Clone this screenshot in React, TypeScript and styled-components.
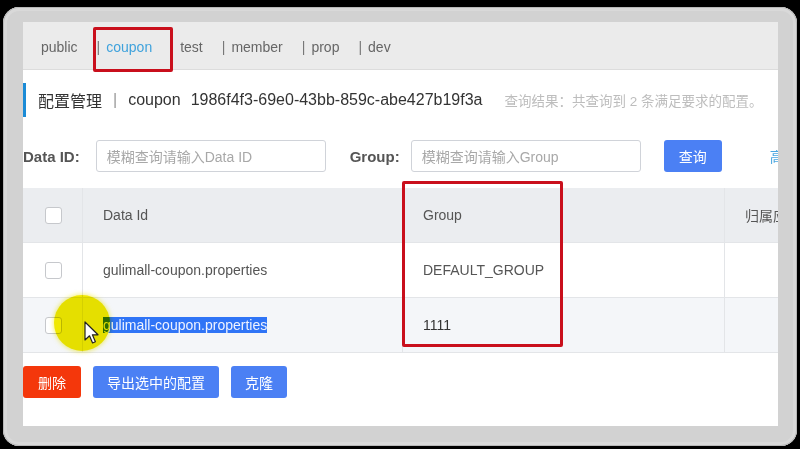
import styled, { createGlobalStyle } from 'styled-components';

const GlobalStyle = createGlobalStyle`
    html, body {
        margin: 0;
        padding: 0;
        background: #000;
    }
    *, *::before, *::after {
        box-sizing: border-box;
    }
`;

const FONT = `"Liberation Sans", "Noto Sans CJK SC", sans-serif`;

const Page = styled.div`
    width: 800px;
    height: 449px;
    background: #000;
    padding: 7px 0 0 3px;
    font-family: ${FONT};
`;
const Frame = styled.div`
    width: 794px;
    height: 439px;
    padding: 15px 19px 20px 20px;
    background: #d2d2d2;
    border-radius: 16px;
    box-shadow: inset 0 0 0 1px #b8b8b8, inset 0 0 0 4px #d9d9d9;
`;
const Screen = styled.div`
    position: relative;
    width: 755px;
    height: 404px;
    background: #fff;
    overflow: hidden;
    display: flex;
    flex-direction: column;
`;
const NavBar = styled.div`
    height: 48px;
    flex-shrink: 0;
    display: flex;
    align-items: stretch;
    padding: 3px 0 0 18px;
    background: #ebebeb;
    border-bottom: 1px solid #dcdcdc;
    font-size: 14px;
    color: #666;
`;
const NavItem = styled.span<{ $active?: boolean; $boxed?: boolean; $ml?: number }>`
    position: relative;
    display: flex;
    align-items: center;
    margin-left: ${(p) => p.$ml ?? 0}px;
    color: ${(p) => (p.$active ? '#3fa2dc' : '#666')};
    &::after {
        content: '';
        display: ${(p) => (p.$boxed ? 'block' : 'none')};
        position: absolute;
        left: -13px;
        top: 2px;
        width: 80px;
        height: 45px;
        border: 3px solid #c90f1c;
        border-radius: 2px;
    }
`;
const NavSep = styled.span`
    display: flex;
    align-items: center;
    margin: 0 6px 0 19px;
    color: #777;
`;
const Body = styled.div`
    display: flex;
    flex-direction: column;
`;
const TitleRow = styled.div`
    margin-top: 13px;
    height: 34px;
    display: flex;
    align-items: center;
    border-left: 3px solid #1b8bd6;
    padding-left: 12px;
    white-space: nowrap;
`;
const TitleText = styled.span`
    font-size: 16px;
    color: #333;
`;
const TitleSep = styled.span`
    font-size: 16px;
    color: #999;
    margin: 0 11px 0 11px;
`;
const TitleId = styled.span`
    font-size: 16px;
    color: #333;
    margin-left: 10px;
`;
const ResultText = styled.span`
    font-size: 13.5px;
    color: #bdbdbd;
    margin-left: 22px;
`;
const SearchRow = styled.div`
    margin-top: 23px;
    height: 32px;
    display: flex;
    align-items: center;
    white-space: nowrap;
    & > * {
        flex-shrink: 0;
    }
`;
const Label = styled.span<{ $gap: number }>`
    font-size: 15px;
    font-weight: bold;
    color: #555;
    margin-right: ${(p) => p.$gap}px;
`;
const SearchInput = styled.div<{ $gap: number }>`
    width: 230px;
    height: 32px;
    display: flex;
    align-items: center;
    padding-left: 10px;
    border: 1px solid #d0d3d9;
    border-radius: 3px;
    font-size: 14px;
    color: #a8a8a8;
    margin-right: ${(p) => p.$gap}px;
`;
const Button = styled.button<{ $danger?: boolean; $w: number }>`
    flex-shrink: 0;
    width: ${(p) => p.$w}px;
    height: 32px;
    border: none;
    border-radius: 3px;
    background: ${(p) => (p.$danger ? '#f4370b' : '#4b80f4')};
    color: #fff;
    font-family: ${FONT};
    font-size: 14px;
    padding: 0;
`;
const LinkText = styled.span`
    margin-left: 48px;
    font-size: 14px;
    color: #4aa6e0;
`;
const TableWrap = styled.div`
    position: relative;
    margin-top: 16px;
    width: 902px;
`;
const Row = styled.div<{ $head?: boolean; $hover?: boolean }>`
    display: grid;
    grid-template-columns: 60px 320px 322px 200px;
    height: 55px;
    background: ${(p) => (p.$head ? '#ebedf0' : p.$hover ? '#f4f6f9' : '#fff')};
    border-bottom: 1px solid #e3e5e8;
`;
const Cell = styled.div<{ $center?: boolean; $dark?: boolean }>`
    display: flex;
    align-items: center;
    justify-content: ${(p) => (p.$center ? 'center' : 'flex-start')};
    padding-left: ${(p) => (p.$center ? 0 : 20)}px;
    border-right: 1px solid #e3e5e8;
    font-size: 14px;
    color: ${(p) => (p.$dark ? '#333' : '#555')};
    white-space: nowrap;
`;
const Checkbox = styled.span`
    width: 17px;
    height: 17px;
    border: 1px solid #c6c8cc;
    border-radius: 3px;
    background: #fff;
    margin-left: 2px;
`;
const Selected = styled.span`
    background: #2f74f6;
    color: #eef2ff;
    line-height: 16px;
`;
const Annotation = styled.div`
    position: absolute;
    left: 379px;
    top: -7px;
    width: 161px;
    height: 166px;
    border: 3px solid #c90f1c;
    border-radius: 2px;
`;
const Actions = styled.div`
    margin-top: 13px;
    display: flex;
    gap: 12px;
`;
const Spot = styled.div`
    position: absolute;
    left: 31px;
    top: 273px;
    width: 56px;
    height: 56px;
    border-radius: 50%;
    background: #f0e800;
    mix-blend-mode: multiply;
    box-shadow: 0 0 4px 1px rgba(240, 232, 0, 0.5);
`;
const Cursor = styled.svg`
    position: absolute;
    left: 61px;
    top: 299px;
`;

const tabs = ['public', 'coupon', 'test', 'member', 'prop', 'dev'];

export default function App() {
    return (
        <Page>
            <GlobalStyle />
            <Frame>
                <Screen>
                    <NavBar>
                        {tabs.map((t, i) => (
                            <span key={t} style={{ display: 'contents' }}>
                                {i > 0 && t !== 'test' && <NavSep>|</NavSep>}
                                <NavItem
                                    $active={t === 'coupon'}
                                    $boxed={t === 'coupon'}
                                    $ml={t === 'test' ? 28 : 0}
                                >
                                    {t}
                                </NavItem>
                            </span>
                        ))}
                    </NavBar>
                    <Body>
                        <TitleRow>
                            <TitleText>配置管理</TitleText>
                            <TitleSep>|</TitleSep>
                            <TitleText>coupon</TitleText>
                            <TitleId>1986f4f3-69e0-43bb-859c-abe427b19f3a</TitleId>
                            <ResultText>查询结果：共查询到 2 条满足要求的配置。</ResultText>
                        </TitleRow>
                        <SearchRow>
                            <Label $gap={16}>Data ID:</Label>
                            <SearchInput $gap={24}>模糊查询请输入Data ID</SearchInput>
                            <Label $gap={11}>Group:</Label>
                            <SearchInput $gap={23}>模糊查询请输入Group</SearchInput>
                            <Button $w={58}>查询</Button>
                            <LinkText>高级查询</LinkText>
                        </SearchRow>
                        <TableWrap>
                            <Row $head>
                                <Cell $center>
                                    <Checkbox />
                                </Cell>
                                <Cell>Data Id</Cell>
                                <Cell>Group</Cell>
                                <Cell>归属应用:</Cell>
                            </Row>
                            <Row>
                                <Cell $center>
                                    <Checkbox />
                                </Cell>
                                <Cell>gulimall-coupon.properties</Cell>
                                <Cell>DEFAULT_GROUP</Cell>
                                <Cell />
                            </Row>
                            <Row $hover>
                                <Cell $center>
                                    <Checkbox />
                                </Cell>
                                <Cell>
                                    <Selected>gulimall-coupon.properties</Selected>
                                </Cell>
                                <Cell $dark>1111</Cell>
                                <Cell />
                            </Row>
                            <Annotation />
                        </TableWrap>
                        <Actions>
                            <Button $danger $w={58}>删除</Button>
                            <Button $w={126}>导出选中的配置</Button>
                            <Button $w={56}>克隆</Button>
                        </Actions>
                    </Body>
                    <Spot />
                    <Cursor width="16" height="24" viewBox="0 0 16 24">
                        <path
                            d="M1 1 L1 19 L5.5 14.8 L8.6 22 L11.4 20.8 L8.4 13.8 L14 13.8 Z"
                            fill="#fff"
                            stroke="#222"
                            strokeWidth="1.2"
                            strokeLinejoin="round"
                        />
                    </Cursor>
                </Screen>
            </Frame>
        </Page>
    );
}
